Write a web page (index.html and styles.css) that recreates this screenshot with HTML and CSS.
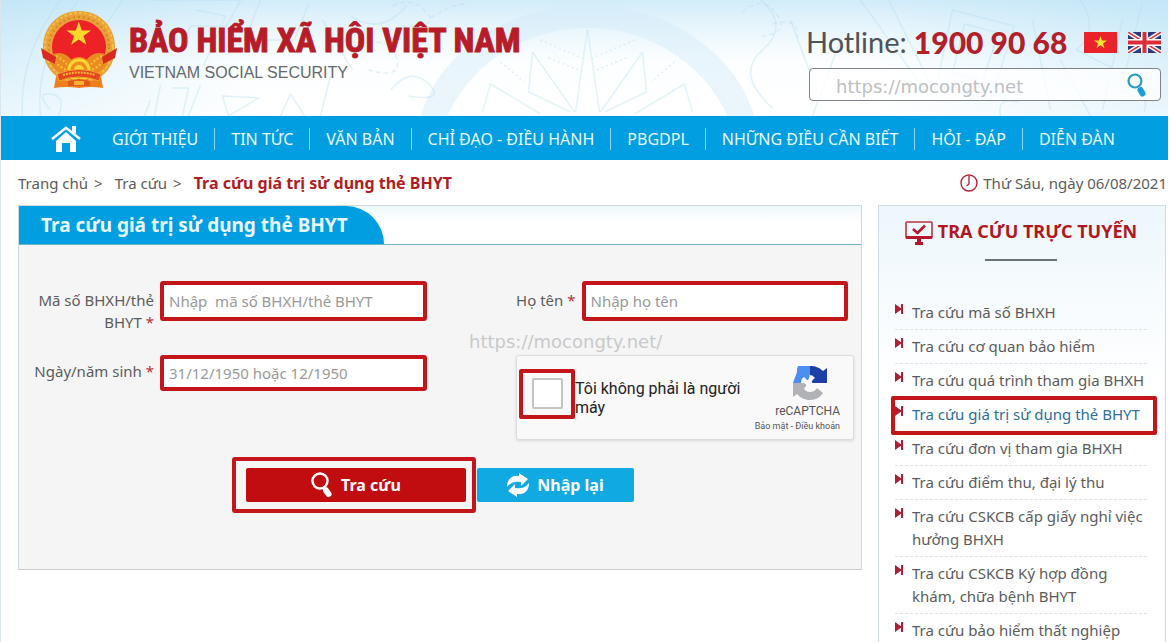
FILE: index.html
```html
<!DOCTYPE html>
<html lang="vi">
<head>
<meta charset="utf-8">
<meta name="viewport" content="width=device-width, initial-scale=1">
<title>Bảo hiểm xã hội Việt Nam</title>
<link rel="stylesheet" href="styles.css">
</head>
<body>
<div class="page">
  <header class="header">
    <svg class="pattern" viewBox="0 0 1168 116" preserveAspectRatio="xMidYMin slice" aria-hidden="true">
      <g fill="none" stroke="#b4dcee" stroke-opacity=".38" stroke-width="1.500">
        <path d="M420 116C440 50 510 5 587 5S734 50 754 116H727C705 66 651 28 587 28S469 66 447 116Z" fill="#d3ecf8" fill-opacity=".45" stroke="none"/>
        <path d="M482 112l8-28 50 30M532 52l-4 40 42 20M532 52l42 60M587 29l-12 83M587 29l12 83M642 52l4 40-42 20M642 52l-42 60M692 112l-8-28-50 30" stroke-opacity=".35"/>
        <path d="M540 40l42 18M548 58l30 12M634 40l-42 18M626 58l-30 12M500 62l24 20M674 62l-24 20" stroke-dasharray="2 3" stroke-opacity=".4"/>
        <path d="M60 0Q18 56 22 116M78 0Q34 56 40 116M122 0l-20 30M50 110q-16-18 0-16t8 22M150 100l-6 16M160 85l-6 31M172 88h16l-6 28M200 85l-12 31M222 96l36 2-30 18ZM280 116l10-22 14 22M150 0l90 0-14 26h-36l-10 24M195 10l30 6-22 50M260 0l-16 40h50l14-36M330 76l-10 40M322 20l30 50M350 16q30 20 56-10M390 90q20-24 38-6t-20 12M760 0q30 26 2 50t10 58M790 20l26 70M860 0l60 84M888 0l48 96M952 10l62 16-24 74-54-14ZM964 24l34 9-16 48-30-8ZM1032 20l18 90M1080 0q20 30-4 50l36 18M1060 60l30 56M1122 20l-20 90M1142 2l-22 90q30-4 24 20M1000 116q-4-20 18-14M840 40l-28 76"/>
        <path d="M392 6q20-10 34 6t-24 14M430 18q22-14 34-14M742 12q20-18 34 2t-16 22M772 24q30-8 24 18M360 44q30-8 36 14t-28 12" stroke-dasharray="5 3"/>
      </g>
    </svg>
    <div class="brand">
      <svg class="emblem" viewBox="0 0 78 80" aria-hidden="true">
        <path d="M17 61l-3 17q12-2 25 0 12-2 24 0l-3-17Z" fill="#ee7f1c"/>
        <path d="M39 1C60 1 75 17 75 37c0 17-9 29-22 34H25C12 66 3 54 3 37 3 17 18 1 39 1Z" fill="#e9a13a"/>
        <circle cx="39" cy="37" r="34" fill="none" stroke="#f4bf43" stroke-width="2" stroke-dasharray="3 2"/>
        <circle cx="39" cy="37" r="30" fill="none" stroke="#d98420" stroke-width="2" stroke-dasharray="2 3"/>
        <circle cx="39" cy="37" r="27" fill="#ec2227"/>
        <path d="M39 14l3.600 10.500h11l-9 6.500 3.500 10.500-9.100-6.400-9.100 6.400 3.500-10.500-9-6.500h11Z" fill="#fbd72b" transform="translate(6 0) scale(.84)"/>
        <path d="M8 46q16-8 25 6l-5 14q-16-4-20-20ZM70 46q-16-8-25 6l5 14q16-4 20-20Z" fill="#ec8a22"/>
        <path d="M12 48q8 10 15 12M16 46q8 4 12 10M66 48q-8 10-15 12M62 46q-8 4-12 10" fill="none" stroke="#f6c238" stroke-width="2" stroke-dasharray="2 2"/>
        <circle cx="39" cy="60" r="13" fill="#f18c1c"/>
        <circle cx="39" cy="60" r="10" fill="none" stroke="#fdd835" stroke-width="3"/>
        <circle cx="39" cy="60" r="5" fill="#fdd835"/>
        <path d="M1 38l15 9-1 7-12-6ZM77 38l-15 9 1 7 12-6Z" fill="#d92a20"/>
        <path d="M17 64q22-9 44 0l-2 7q-20-8-40 0Z" fill="#e4471f" stroke="#f4a62c"/>
        <path d="M23 65q16-5 32 0" fill="none" stroke="#f7b637" stroke-width="2" stroke-dasharray="2 1"/>
        <path d="M28 71q11-4 22 0v5H28Z" fill="#e05a1c"/><path d="M34 71h10v4H34Z" fill="#f9b233"/>
      </svg>
      <div class="names">
        <h1 class="name">BẢO HIỂM XÃ HỘI VIỆT NAM</h1>
        <p class="name-en">VIETNAM SOCIAL SECURITY</p>
      </div>
    </div>
    <div class="tools">
      <div class="hotline">
        <span class="hot-label">Hotline:</span>
        <strong class="hot-number">1900 90 68</strong>
        <a class="flag" href="#" aria-label="Tiếng Việt"><svg viewBox="0 0 33 21"><path fill="#e9222b" d="M0 0h33v21H0z"/><path fill="#ffe22f" d="M16.500 4l1.500 4.600h5l-4 2.900 1.500 4.700-4-2.900-4 2.900 1.500-4.700-4-2.900h5Z"/></svg></a>
        <a class="flag" href="#" aria-label="English"><svg viewBox="0 0 33 21"><path fill="#2b3b82" d="M0 0h33v21H0z"/><path d="M0 0l33 21M33 0L0 21" stroke="#fff" stroke-width="4.500"/><path d="M0 0l33 21M33 0L0 21" stroke="#d8343e" stroke-width="1.500"/><path d="M16.500 0v21M0 10.500h33" stroke="#fff" stroke-width="7"/><path d="M16.500 0v21M0 10.500h33" stroke="#dc2c37" stroke-width="4"/></svg></a>
      </div>
      <form class="search">
        <input class="search-input" type="text" placeholder="https://mocongty.net" aria-label="Tìm kiếm">
        <button class="search-button" type="button" aria-label="Tìm"><svg viewBox="0 0 20 24"><circle cx="8" cy="8" r="6.500" fill="none" stroke="#2a9cc0" stroke-width="2.200"/><path d="M13.500 17l2 3.500" stroke="#1d9ed6" stroke-width="6" stroke-linecap="round"/></svg></button>
      </form>
    </div>
  </header>

  <nav class="nav">
    <a class="home" href="#" aria-label="Trang chủ"><svg viewBox="0 0 30 27"><path fill="#fff" d="M15 6l10 9v11h-6v-9h-8v9H5V15Z"/><path fill="none" stroke="#fff" stroke-width="2.600" d="M1 13L15 1.800 29 13"/><path fill="#fff" d="M21 0h4v8l-4-3Z"/></svg></a>
    <a href="#">GIỚI THIỆU</a><a href="#">TIN TỨC</a><a href="#">VĂN BẢN</a><a href="#">CHỈ ĐẠO - ĐIỀU HÀNH</a><a href="#">PBGDPL</a><a href="#">NHỮNG ĐIỀU CẦN BIẾT</a><a href="#">HỎI - ĐÁP</a><a href="#">DIỄN ĐÀN</a>
  </nav>

  <div class="crumbs">
    <div class="path"><a href="#">Trang chủ</a><span>&gt;</span><a href="#">Tra cứu</a><span>&gt;</span><strong>Tra cứu giá trị sử dụng thẻ BHYT</strong></div>
    <div class="date"><svg viewBox="0 0 18 18" aria-hidden="true"><circle cx="9" cy="9" r="8" fill="none" stroke="#b3263a" stroke-width="1.400"/><path d="M9 2v8l-2.500 2" fill="none" stroke="#b3263a" stroke-width="1.400"/></svg><span>Thứ Sáu, ngày 06/08/2021</span></div>
  </div>

  <div class="columns">
    <main class="panel">
      <div class="panel-head"><h2 class="tab">Tra cứu giá trị sử dụng thẻ BHYT</h2></div>
      <form class="form">
        <div class="fields">
          <label class="label" for="code">Mã số BHXH/thẻ BHYT <em>*</em></label>
          <input class="field" id="code" type="text" placeholder="Nhập&nbsp; mã số BHXH/thẻ BHYT">
          <label class="label" for="fullname">Họ tên <em>*</em></label>
          <input class="field" id="fullname" type="text" placeholder="Nhập họ tên">
          <label class="label label-slim" for="birth">Ngày/năm sinh <em>*</em></label>
          <input class="field field-slim" id="birth" type="text" placeholder="31/12/1950 hoặc 12/1950">
          <div class="captcha">
            <span class="check-frame"><input class="check" id="robot" type="checkbox"></span>
            <label class="check-label" for="robot">Tôi không phải là người máy</label>
            <div class="captcha-brand">
              <svg viewBox="0 0 34 34" aria-hidden="true">
                <path d="M17 0v8c-1 4-1 6-3 6l-3-3c-2 1-3 3-3 6H0L4 6V3l1-3Z" fill="#4b8ff0"/>
                <path d="M17 0c6 0 10 2 13 5l4-3v15H21c-3 0-3-2 1-5-2-2-3-3-5-3Z" fill="#1c3fa8"/>
                <path d="M0 17v14l4-3c3 3.500 7.500 6 13 6 6 0 10.500-3 13-7l-6-5c-1.500 2.500-4 4-7 4s-5.500-1.500-6-4c3-1 3-5-1-5Z" fill="#b0b2b5"/>
              </svg>
              <span class="captcha-name">reCAPTCHA</span>
              <span class="captcha-links"><a href="#">Bảo mật</a> - <a href="#">Điều khoản</a></span>
            </div>
          </div>
        </div>
        <p class="watermark">https://mocongty.net/</p>
        <div class="actions">
          <span class="submit-frame">
            <button class="button submit" type="button"><svg viewBox="0 0 22 26" aria-hidden="true"><circle cx="9" cy="9" r="7.500" fill="none" stroke="#fff" stroke-width="2.400"/><path d="M15 18.500l2.500 3.500" stroke="#fff" stroke-width="6" stroke-linecap="round"/></svg>Tra cứu</button>
          </span>
          <button class="button reset" type="button"><svg viewBox="0 0 22 26" aria-hidden="true"><path fill="#fff" d="M0 15C0 7 5 3 12 4V1l9 6-7 7v-4C8 9 4 10 0 15ZM22 11c0 8-5 12-12 11v3l-9-6 7-7v4c6 1 10 0 14-5Z"/></svg>Nhập lại</button>
        </div>
      </form>
    </main>

    <aside class="side">
      <h2 class="side-title"><svg viewBox="0 0 28 24" aria-hidden="true"><rect x="1" y="1" width="26" height="16" rx="1" fill="none" stroke="#c03142" stroke-width="1.600"/><path d="M1 16.500h26" stroke="#b5182a" stroke-width="3"/><path d="M8 8l4.500 4L20 4.500" fill="none" stroke="#b5182a" stroke-width="2.600"/><path d="M12 18h4v3h2v3h-8v-3h2Z" fill="#b5182a"/></svg>TRA CỨU TRỰC TUYẾN</h2>
      <hr class="rule">
      <ul class="links">
        <li><a href="#">Tra cứu mã số BHXH</a></li>
        <li><a href="#">Tra cứu cơ quan bảo hiểm</a></li>
        <li><a href="#">Tra cứu quá trình tham gia BHXH</a></li>
        <li class="current"><a href="#" aria-current="page">Tra cứu giá trị sử dụng thẻ BHYT</a></li>
        <li><a href="#">Tra cứu đơn vị tham gia BHXH</a></li>
        <li><a href="#">Tra cứu điểm thu, đại lý thu</a></li>
        <li><a href="#">Tra cứu CSKCB cấp giấy nghỉ việc hưởng BHXH</a></li>
        <li><a href="#">Tra cứu CSKCB Ký hợp đồng khám, chữa bệnh BHYT</a></li>
        <li><a href="#">Tra cứu bảo hiểm thất nghiệp</a></li>
      </ul>
    </aside>
  </div>
</div>
</body>
</html>
```
FILE: styles.css
```css
* { box-sizing: border-box; }
body { margin: 0; background: #fff; color: #5c5c5c; font: 15px/22px "Noto Sans", sans-serif; }
a { color: inherit; text-decoration: none; }
h1, h2, p, ul { margin: 0; padding: 0; }
svg { display: block; }
button { font: inherit; cursor: pointer; border: 0; }
.page { border-left: 1px solid #dce6ea; margin-right: 2px; }

.header { position: relative; display: flex; justify-content: space-between; min-height: 116px; padding: 10px 7px 0 39px; overflow: hidden;
  background: linear-gradient(transparent, rgba(255,255,255,.6)), linear-gradient(90deg, rgba(191,229,247,.8), rgba(225,243,252,0) 22%, rgba(225,243,252,0) 75%, rgba(191,229,247,.8)), linear-gradient(#d2ecfa, #fbfeff 55%, #fff); }
.pattern { position: absolute; inset: 0; width: 100%; height: 100%; }
.brand, .tools { position: relative; }
.brand { display: flex; align-items: flex-start; gap: 11px; }
.emblem { width: 78px; height: 80px; }
.names { padding-top: 8px; }
.name { color: #b71c28; font: bold 34px/44px "Roboto Condensed", Roboto, sans-serif; -webkit-text-stroke: 1px #b71c28; white-space: nowrap; }
.name-en { font: 16px/22px "Liberation Sans", sans-serif; color: #66696d; }
.tools { width: 352px; padding-top: 16px; }
.hotline { display: flex; align-items: center; height: 32px; margin-left: -3px; white-space: nowrap; }
.hot-label { font: 29px/32px Lato, sans-serif; color: #505356; }
.hot-number { margin-left: 7px; font: 900 30px/32px Lato, sans-serif; color: #b3202a; }
.flag { width: 33px; height: 21px; margin-left: 11px; }
.hot-number + .flag { margin-left: auto; }
.search { display: flex; align-items: center; height: 33px; margin-top: 10px; border: 1px solid #7e8389; border-radius: 4px; background: rgba(255,255,255,.8); }
.search-input { flex: 1; min-width: 0; height: 30px; padding: 3px 0 0 26px; border: 0; background: none; font: 18px/22px "DejaVu Sans", sans-serif; color: #666; }
.search-input::placeholder { color: #bdc0c2; opacity: 1; }
.search-button { width: 46px; padding: 0 13px; background: none; }
.search-button svg { width: 20px; height: 24px; }

.nav { display: flex; align-items: center; height: 44px; padding: 2px 0 0 50px; background: #019ee1; color: #e9f9ff; font-size: 16px; white-space: nowrap; }
.nav a { padding: 0 16px; line-height: 22px; }
.nav a + a + a { border-left: 1px solid #8fd6f3; }
.nav .home { padding: 0; margin-right: 15px; }
.home svg { width: 30px; height: 27px; }

.crumbs { display: flex; justify-content: space-between; align-items: center; height: 45px; padding: 0 1px 0 17px; }
.path, .date { display: flex; align-items: center; white-space: nowrap; }
.path span { margin: 0 12px 0 6px; }
.path strong { color: #b01c22; font-size: 16px; }
.date { gap: 5px; }
.date svg { width: 18px; height: 18px; }

.columns { display: flex; align-items: flex-start; gap: 16px; padding: 0 2px 0 17px; }
.panel { position: relative; flex: 1; border: 1px solid #cfdadf; border-bottom-color: #ccc; background: #f5f5f5; min-height: 365px; }
.panel-head { height: 39px; border-bottom: 1px solid #6fb3be; background: linear-gradient(#edf7fc, #fff 40%); }
.tab { display: inline-block; height: 38px; padding: 0 36px 0 22px; border-top-right-radius: 38px; background: #019ee1; color: #e9f9ff; font-size: 19px; line-height: 38px; white-space: nowrap; }
.fields { display: grid; grid-template-columns: 122px 1fr 143px 1fr; column-gap: 6px; row-gap: 22px; align-items: start; padding: 36px 13px 0 13px; }
.label { padding-top: 8px; text-align: right; }
.label-slim { padding-top: 5px; }
.label em { color: #b8303c; font-style: normal; }
.field { width: 100%; height: 40px; padding: 0 5px; border: 4px solid #c4151b; border-radius: 3px; background: #fff; color: #555; font: inherit; }
.field-slim { height: 36px; }
.field::placeholder { color: #999; opacity: 1; }
.watermark { position: absolute; left: 450px; top: 125px; color: #c8c9ca; font: 18px/22px "DejaVu Sans", sans-serif; }
.captcha { grid-column: 3 / 5; justify-self: end; display: flex; align-items: center; width: 338px; height: 85px; margin-right: -6px; padding-left: 2px; border: 1px solid #dcdcdc; border-radius: 3px; background: #f9f9f9; box-shadow: 0 1px 3px rgba(0,0,0,.12); font-family: Roboto, sans-serif; }
.check-frame { display: grid; place-items: center; flex: none; width: 56px; height: 50px; margin-bottom: 8px; border: 4px solid #c4151b; border-radius: 2px; }
.check { appearance: none; width: 31px; height: 31px; margin: 0; border: 2px solid #c4c4c4; border-radius: 2px; background: #fff; }
.check-label { flex: 1; color: #222; font-size: 16px; line-height: 19px; }
.captcha-brand { display: flex; flex-direction: column; align-items: flex-end; width: 90px; margin-right: 13px; white-space: nowrap; color: #555; }
.captcha-brand svg { width: 34px; height: 34px; margin: 4px 13px 4px 0; }
.captcha-name { font-size: 12px; line-height: 15px; }
.captcha-links { font-size: 9px; line-height: 14px; }
.actions { display: flex; align-items: center; gap: 1px; padding: 17px 0 0 213px; }
.submit-frame { padding: 7px 6px 7px 10px; border: 4px solid #c4151b; border-radius: 3px; }
.button { display: flex; align-items: center; justify-content: center; height: 34px; border-radius: 2px; color: #fff; font-size: 16px; font-weight: 700; gap: 8px; }
.button svg { width: 22px; height: 26px; }
.submit { width: 220px; background: #c10d10; }
.reset { width: 157px; background: #10a9e2; }

.side { width: 288px; padding: 13px 18px 0 16px; border: 1px solid #cfdde3; background: linear-gradient(#edf7fc, #fff 180px); }
.side-title { display: flex; justify-content: center; gap: 5px; color: #b11721; font-size: 18px; line-height: 25px; white-space: nowrap; }
.side-title svg { width: 28px; height: 24px; margin-top: 2px; }
.rule { width: 72px; height: 2px; margin: 14px auto 35px; border: 0; background: #6b7276; }
.links { list-style: none; line-height: 23px; }
.links li { position: relative; padding: 5px 0 5px 17px; border-bottom: 1px dashed #dfe3e5; }
.links li::before { content: ""; position: absolute; left: 0; top: 8px; width: 8px; height: 10px; background: #ac2036; clip-path: polygon(0 0, 75% 42%, 75% 0, 100% 0, 100% 100%, 75% 100%, 75% 58%, 0 100%); }
.links .current { color: #2f6d9b; border-bottom-color: transparent; }
.links .current::after { content: ""; position: absolute; inset: -2px -10px -4px -4px; border: 4px solid #c4151b; border-radius: 2px; }
```
